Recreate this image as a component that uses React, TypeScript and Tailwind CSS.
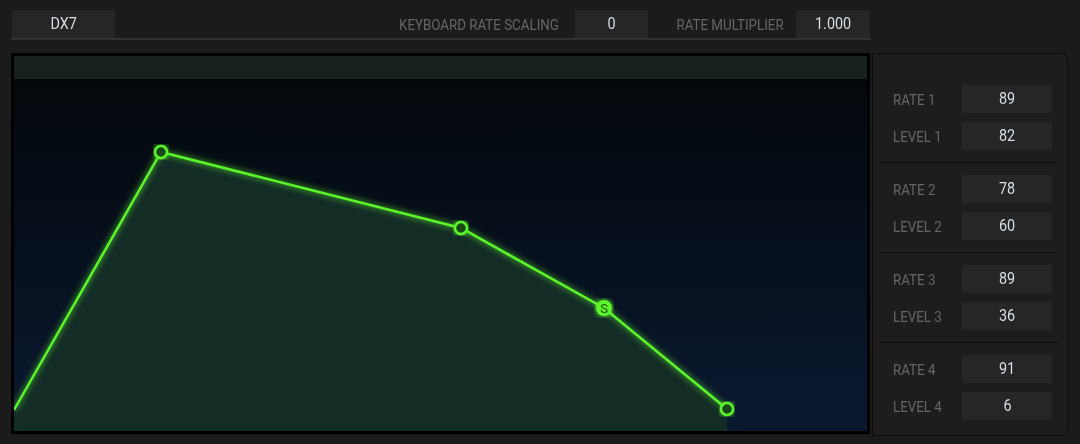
import React from 'react';

const font = { fontFamily: 'Roboto, "Liberation Sans", sans-serif' };

const stages = [
  { rate: 89, level: 82 },
  { rate: 78, level: 60 },
  { rate: 89, level: 36 },
  { rate: 91, level: 6 },
];

const ValueBox: React.FC<{ value: string; className?: string }> = ({ value, className = '' }) => (
  <div className={`flex items-center justify-center bg-[#262626] text-[#d6dde6] ${className}`}>
    <span className="inline-block text-[16px] scale-x-[0.9] leading-none">{value}</span>
  </div>
);

const Label: React.FC<{ text: string; right?: boolean }> = ({ text, right }) => (
  <span
    className={`inline-block whitespace-nowrap text-[15.5px] leading-none text-[#666666] scale-x-[0.86] ${
      right ? 'origin-right' : 'origin-left'
    }`}
  >
    {text}
  </span>
);

const EnvelopeGraph: React.FC = () => {
  // points in svg space (853 x 352)
  const pts = [
    [0, 331],
    [147, 73],
    [447, 149],
    [590, 229],
    [713, 330],
  ];
  const line = pts.map((p) => p.join(',')).join(' ');
  const fill = `0,352 ${line} 713,352`;

  return (
    <svg width="853" height="352" viewBox="0 0 853 352" className="block">
      <defs>
        <linearGradient id="bg" x1="0" y1="0" x2="0" y2="1">
          <stop offset="0" stopColor="#04080c" />
          <stop offset="1" stopColor="#0a1830" />
        </linearGradient>
        <filter id="glow" x="-10%" y="-10%" width="120%" height="120%">
          <feGaussianBlur stdDeviation="3" result="b" />
          <feMerge>
            <feMergeNode in="b" />
            <feMergeNode in="SourceGraphic" />
          </feMerge>
        </filter>
      </defs>
      <rect width="853" height="352" fill="url(#bg)" />
      <polygon points={fill} fill="#132c26" />
      <polyline points={line} fill="none" stroke="#5cf52c" strokeWidth="2.5" filter="url(#glow)" />
      {[pts[1], pts[2], pts[4]].map(([x, y], i) => (
        <circle key={i} cx={x} cy={y} r="6" fill="#174a18" stroke="#5cf52c" strokeWidth="2.5" filter="url(#glow)" />
      ))}
      <circle cx={pts[3][0]} cy={pts[3][1]} r="8" fill="#5cf52c" filter="url(#glow)" />
      <text
        x={pts[3][0]}
        y={pts[3][1] + 4.5}
        textAnchor="middle"
        fontSize="13"
        fontFamily="Roboto, sans-serif"
        fill="#1e5410"
      >
        S
      </text>
    </svg>
  );
};

export default function App() {
  return (
    <div className="w-[1080px] h-[444px] bg-[#1b1b1b] overflow-hidden" style={font}>
      {/* Header */}
      <div className="ml-[11px] w-[860px] pt-[10px] border-b-2 border-[#313131] flex items-center">
        <ValueBox value="DX7" className="ml-[1px] w-[103px] h-[28px]" />
        <div className="flex-1" />
        <div className="w-[160px] mr-[16px] mt-[3px] flex justify-end">
          <Label text="KEYBOARD RATE SCALING" right />
        </div>
        <ValueBox value="0" className="w-[73px] h-[28px]" />
        <div className="w-[110px] ml-[26px] mr-[12px] mt-[3px] flex justify-end">
          <Label text="RATE MULTIPLIER" right />
        </div>
        <ValueBox value="1.000" className="w-[74px] h-[28px] mr-[1px]" />
      </div>

      <div className="flex mt-[13px] ml-[11px]">
        {/* Graph */}
        <div className="border-[3px] border-black bg-black w-[859px] h-[381px] flex flex-col">
          <div className="h-[23px] bg-[#19211f]" />
          <EnvelopeGraph />
        </div>

        {/* Stage panel */}
        <div className="ml-[2px] w-[196px] h-[383px] bg-[#1d1d1d] border border-[#0c0c0c] rounded-tr-[6px] rounded-br-[6px] pt-[31px] px-[7px]">
          {stages.map((s, i) => (
            <div key={i} className={i > 0 ? 'border-t border-[#0e0e0e] pt-[12px] mt-[12px]' : ''}>
              <div className="flex items-center pl-[13px]">
                <div className="w-[69px] mt-[2px]">
                  <Label text={`RATE ${i + 1}`} />
                </div>
                <ValueBox value={String(s.rate)} className="w-[90px] h-[28px]" />
              </div>
              <div className="flex items-center pl-[13px] mt-[9px]">
                <div className="w-[69px] mt-[2px]">
                  <Label text={`LEVEL ${i + 1}`} />
                </div>
                <ValueBox value={String(s.level)} className="w-[90px] h-[28px]" />
              </div>
            </div>
          ))}
        </div>
      </div>
    </div>
  );
}
